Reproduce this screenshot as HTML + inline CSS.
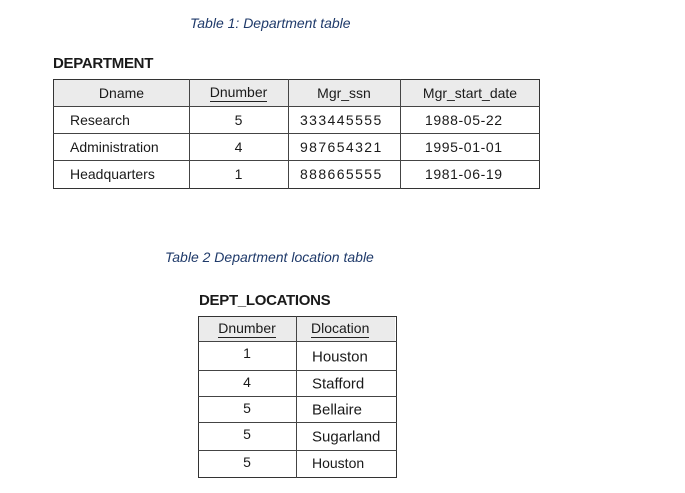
<!DOCTYPE html><html><head><style>
body{margin:0;width:685px;height:493px;background:#fff;position:relative;font-family:"Liberation Sans",Arial,sans-serif;color:#1a1a1a;overflow:hidden}
.a{position:absolute;white-space:nowrap}
.cap{font-style:italic;font-size:14px;color:#1f3a6a}
.t{font-weight:bold;font-size:15px;letter-spacing:-0.3px}
.b{position:absolute;border:1px solid #333;box-sizing:border-box}
.h{position:absolute;background:#ebebeb}
.l{position:absolute;background:#444}
.c{position:absolute;font-size:14px;text-align:center;transform:translateY(-50%);white-space:nowrap}
.n{letter-spacing:1.4px}
.u{border-bottom:1px solid #222;padding-bottom:1px}
</style></head><body>
<div class="a cap" style="left:190px;top:15px">Table 1: Department table</div>
<div class="a t" style="left:53px;top:55px">DEPARTMENT</div>
<div class="h" style="left:54px;top:80px;width:485px;height:26px"></div>
<div class="b" style="left:53px;top:79px;width:487px;height:110px"></div>
<div class="l" style="left:53px;top:106px;width:487px;height:1px"></div>
<div class="l" style="left:53px;top:133px;width:487px;height:1px"></div>
<div class="l" style="left:53px;top:160px;width:487px;height:1px"></div>
<div class="l" style="left:189px;top:79px;width:1px;height:110px"></div>
<div class="l" style="left:288px;top:79px;width:1px;height:110px"></div>
<div class="l" style="left:400px;top:79px;width:1px;height:110px"></div>
<div class="c" style="left:54px;width:135px;top:93px">Dname</div>
<div class="c" style="left:189px;width:99px;top:92px"><span class="u">Dnumber</span></div>
<div class="c" style="left:288px;width:112px;top:93px">Mgr_ssn</div>
<div class="c" style="left:400px;width:140px;top:93px">Mgr_start_date</div>
<div class="c" style="left:70px;top:120px">Research</div>
<div class="c" style="left:70px;top:147px">Administration</div>
<div class="c" style="left:70px;top:174px">Headquarters</div>
<div class="c" style="left:189px;width:99px;top:120px">5</div>
<div class="c" style="left:189px;width:99px;top:147px">4</div>
<div class="c" style="left:189px;width:99px;top:174px">1</div>
<div class="c n" style="left:300px;top:120px">333445555</div>
<div class="c n" style="left:300px;top:147px">987654321</div>
<div class="c n" style="left:300px;top:174px">888665555</div>
<div class="c n" style="left:425px;top:120px;letter-spacing:0.6px">1988-05-22</div>
<div class="c n" style="left:425px;top:147px;letter-spacing:0.6px">1995-01-01</div>
<div class="c n" style="left:425px;top:174px;letter-spacing:0.6px">1981-06-19</div>

<div class="a cap" style="left:165px;top:249px">Table 2 Department location table</div>
<div class="a t" style="left:199px;top:292px">DEPT_LOCATIONS</div>
<div class="h" style="left:199px;top:317px;width:196px;height:24px"></div>
<div class="b" style="left:198px;top:316px;width:199px;height:162px"></div>
<div class="l" style="left:198px;top:341px;width:199px;height:1px"></div>
<div class="l" style="left:198px;top:370px;width:199px;height:1px"></div>
<div class="l" style="left:198px;top:396px;width:199px;height:1px"></div>
<div class="l" style="left:198px;top:422px;width:199px;height:1px"></div>
<div class="l" style="left:198px;top:450px;width:199px;height:1px"></div>
<div class="l" style="left:296px;top:316px;width:1px;height:162px"></div>
<div class="c" style="left:198px;width:98px;top:328px"><span class="u">Dnumber</span></div>
<div class="c" style="left:311px;top:328px"><span class="u">Dlocation</span></div>
<div class="c" style="left:198px;width:98px;top:353px">1</div>
<div class="c" style="left:198px;width:98px;top:382px">4</div>
<div class="c" style="left:198px;width:98px;top:408px">5</div>
<div class="c" style="left:198px;width:98px;top:434px">5</div>
<div class="c" style="left:198px;width:98px;top:462px">5</div>
<div class="c" style="left:312px;top:357px;font-size:15px">Houston</div>
<div class="c" style="left:312px;top:384px;font-size:15px">Stafford</div>
<div class="c" style="left:312px;top:410px;font-size:15px">Bellaire</div>
<div class="c" style="left:312px;top:437px;font-size:15px">Sugarland</div>
<div class="c" style="left:312px;top:463px">Houston</div>
</body></html>
